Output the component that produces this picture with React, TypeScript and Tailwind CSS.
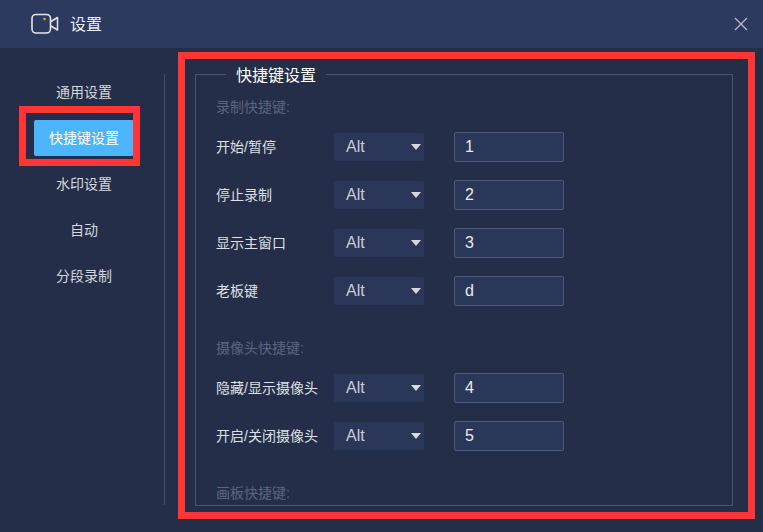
const FONT = "font-['Liberation_Sans','Noto_Sans_CJK_SC',sans-serif]";

const navItems = ["通用设置", "快捷键设置", "水印设置", "自动", "分段录制"];

const groups = [
  {
    title: "录制快捷键:",
    rows: [
      { label: "开始/暂停", key: "1" },
      { label: "停止录制", key: "2" },
      { label: "显示主窗口", key: "3" },
      { label: "老板键", key: "d" },
    ],
  },
  {
    title: "摄像头快捷键:",
    rows: [
      { label: "隐藏/显示摄像头", key: "4" },
      { label: "开启/关闭摄像头", key: "5" },
    ],
  },
  { title: "画板快捷键:", rows: [] },
];

function CameraIcon() {
  return (
    <svg width="30" height="22" viewBox="0 0 30 22" fill="none" className="shrink-0">
      <rect x="1" y="1.5" width="18.5" height="18.5" rx="4" stroke="#e4e6ea" strokeWidth="1.6" />
      <path d="M20 8.5 26.5 4.5V17L20 13" stroke="#e4e6ea" strokeWidth="1.5" strokeLinejoin="round" />
      <circle cx="13.5" cy="6" r="1.3" fill="#e5a50a" />
    </svg>
  );
}

function Row({ label, value }: { label: string; value: string }) {
  return (
    <div className="flex h-[30px] items-center">
      <span className="w-[118px] whitespace-nowrap text-[14px] text-[#dde0e6]">{label}</span>
      <div className="flex h-7 w-[90px] items-center justify-between rounded-[2px] bg-[#2b3759] pl-3 pr-[3px]">
        <span className="text-[16px] text-[#c9ccd3]">Alt</span>
        <svg width="10" height="6" viewBox="0 0 10 6">
          <path d="M0 0H10L5 6Z" fill="#d6d8dd" />
        </svg>
      </div>
      <input
        readOnly
        value={value}
        className="ml-[30px] h-[30px] w-[110px] rounded-[2px] border border-[#4e5a78] bg-[#2b3759] pl-[10px] text-[16px] text-[#e8eaee] outline-none"
      />
    </div>
  );
}

export default function App() {
  return (
    <div className={`relative flex h-[532px] w-[763px] flex-col overflow-hidden bg-[#242e48] ${FONT}`}>
      <header className="flex h-12 shrink-0 items-center bg-[#2b3a5e] pl-[31px] pr-[15px]">
        <CameraIcon />
        <span className="ml-[9px] pt-[2px] text-[16px] text-[#eceef2]">设置</span>
        <svg width="14" height="14" viewBox="0 0 14 14" className="ml-auto" stroke="#b9bcc4" strokeWidth="1.3">
          <path d="M1 1 13 13M13 1 1 13" />
        </svg>
      </header>

      <div className="flex min-h-0 flex-1 items-start">
        <nav className="mt-[26px] flex h-[431px] w-[165px] shrink-0 flex-col items-center gap-[10px] border-r border-[#434e68] pl-[4px]">
          {navItems.map((item, i) => (
            <div
              key={item}
              className={`flex h-9 w-[100px] items-center justify-center rounded-[2px] text-[14px] ${
                i === 1 ? "bg-[#4db5fd] text-white" : "text-[#d5d8de]"
              }`}
            >
              {item}
            </div>
          ))}
        </nav>

        <fieldset className="ml-[30px] mt-[14px] h-[444px] w-[538px] border border-[#4a5570] pl-5">
          <legend className="ml-[10px] h-6 px-[10px] pt-1 text-[16px] leading-[20px] text-white">快捷键设置</legend>
          <div className="flex flex-col">
            {groups.map((group, i) => (
              <section key={group.title} className={i === 0 ? "mt-[11px]" : "mt-[32px]"}>
                <h3 className="mb-[15px] h-5 text-[14px] font-normal leading-5 text-[#5b657f]">{group.title}</h3>
                <div className="flex flex-col gap-[18px]">
                  {group.rows.map((row) => (
                    <Row key={row.label} label={row.label} value={row.key} />
                  ))}
                </div>
              </section>
            ))}
          </div>
        </fieldset>
      </div>

      {/* red annotation boxes */}
      <div className="absolute left-[19px] top-[106px] h-[60px] w-[121px] border-[7px] border-[#fe3636]" />
      <div className="absolute left-[178px] top-[52px] h-[467px] w-[577px] border-[7px] border-[#fe3636]" />
    </div>
  );
}
